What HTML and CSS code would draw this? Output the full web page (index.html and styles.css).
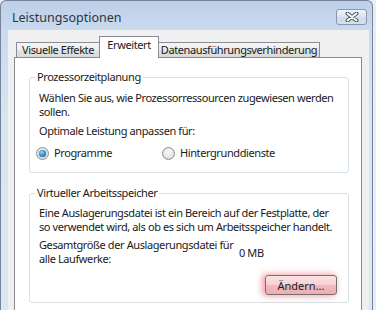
FILE: index.html
```html
<!DOCTYPE html>
<html lang="de">
<head>
    <meta charset="UTF-8">
    <title>Leistungsoptionen</title>
    <link rel="stylesheet" href="styles.css">
</head>
<body>

    <div class="window">
        <div class="titlebar">
            <span class="title">Leistungsoptionen</span>
            <button class="close" type="button" aria-label="Schließen">
                <svg width="14" height="10" viewBox="0 0 14 10">
                    <path d="M2.5 1.5 L11.5 8.5 M11.5 1.5 L2.5 8.5" stroke="#4b5363" stroke-width="4" stroke-linecap="round"/>
                    <path d="M2.5 1.5 L11.5 8.5 M11.5 1.5 L2.5 8.5" stroke="#ffffff" stroke-width="2" stroke-linecap="round"/>
                </svg>
            </button>
        </div>

        <div class="client">
            <div class="tabs">
                <div class="tab tab-first">Visuelle Effekte</div>
                <div class="tab tab-active">Erweitert</div>
                <div class="tab tab-last">Datenausführungsverhinderung</div>
            </div>

            <div class="panel">
                <fieldset class="group group-cpu">
                    <legend>Prozessorzeitplanung</legend>
                    <p>Wählen Sie aus, wie Prozessorressourcen zugewiesen werden<br>sollen.</p>
                    <p class="sub">Optimale Leistung anpassen für:</p>
                    <div class="radios">
                        <label class="radio-item radio-first"><span class="radio checked"></span>Programme</label>
                        <label class="radio-item"><span class="radio"></span>Hintergrunddienste</label>
                    </div>
                </fieldset>

                <fieldset class="group group-mem">
                    <legend>Virtueller Arbeitsspeicher</legend>
                    <p>Eine Auslagerungsdatei ist ein Bereich auf der Festplatte, der<br>so verwendet wird, als ob es sich um Arbeitsspeicher handelt.</p>
                    <div class="size-row">
                        <span class="size-label">Gesamtgröße der Auslagerungsdatei für<br>alle Laufwerke:</span>
                        <span class="size-value">0 MB</span>
                    </div>
                    <div class="actions">
                        <button class="btn" type="button">Ändern...</button>
                    </div>
                </fieldset>
            </div>
        </div>
    </div>

</body>
</html>
```

FILE: styles.css
```css
body {
    margin: 0;
    width: 376px;
    height: 310px;
    overflow: hidden;
    background: #e6eef8;
    font-family: "Noto Sans", "DejaVu Sans", sans-serif;
    font-size: 11px;
    letter-spacing: -0.4px;
    color: #1a1a1a;
}

.window {
    width: 373px;
    height: 310px;
    box-sizing: border-box;
    border: 1px solid #76849a;
    border-bottom: none;
    border-radius: 6px 6px 0 0;
    padding: 0 3px 0 7px;
    overflow: hidden;
    background: linear-gradient(#bdd0e9, #cadbef 30px, #d7e4f3 120px, #dce7f4);
}

.titlebar {
    height: 29px;
    display: flex;
    align-items: flex-start;
}
.title {
    margin: 10px 0 0 4px;
    font-size: 12.5px;
    letter-spacing: 0;
    line-height: 14px;
    color: #2e3440;
}
.close {
    margin: 8px 2px 0 auto;
    width: 31px;
    height: 16px;
    padding: 0;
    border: 1px solid #8797ad;
    border-radius: 3px;
    background: linear-gradient(#eef3fa, #dbe5f1 50%, #cfdbea 51%, #d6e1ee);
    display: flex;
    align-items: center;
    justify-content: center;
}
.close svg { display: block; }

.client {
    height: 290px;
    background: #f0f0f0;
    padding: 6px 7px 0 6px;
}

.tabs {
    position: relative;
    z-index: 1;
    display: flex;
    align-items: flex-start;
    height: 22px;
    margin-bottom: -1px;
    padding-left: 2px;
}
.tab {
    box-sizing: border-box;
    height: 15px;
    margin-top: 6px;
    border: 1px solid #898c95;
    border-bottom: none;
    background: linear-gradient(#f6f6f6, #ececec 50%, #e2e2e2 51%, #dadada);
    text-align: center;
    line-height: 14px;
    white-space: nowrap;
}
.tab-first {
    width: 83px;
    border-right: none;
}
.tab-active {
    width: 60px;
    height: 22px;
    margin-top: 0;
    padding-top: 1px;
    background: #ffffff;
}
.tab-last {
    width: 161px;
    border-left: none;
}

.panel {
    height: 270px;
    border: 1px solid #898c95;
    background: #ffffff;
}

.group {
    margin: 12px 12px 0 14px;
    padding: 7px 9px 12px 9px;
    min-width: 0;
    border: 1px solid #d5dfe5;
    border-radius: 3px;
}
.group legend {
    margin-left: -4px;
    padding: 0 2px;
    line-height: 14px;
}
.group-mem {
    margin-top: 13px;
    padding-top: 6px;
    padding-bottom: 7px;
}

p {
    margin: 0;
    line-height: 14px;
    white-space: nowrap;
}
.sub { margin-top: 5px; }

.radios {
    display: flex;
    margin: 8px 0 0 -3px;
    line-height: 14px;
}
.radio-item {
    display: flex;
    align-items: center;
}
.radio-first { width: 126px; }
.radio {
    box-sizing: border-box;
    width: 13px;
    height: 13px;
    margin-right: 5px;
    border: 1px solid #8d8f91;
    border-radius: 50%;
    background: radial-gradient(circle at 50% 40%, #fbfbfb, #e4e4e4 60%, #cdcdcd);
    display: flex;
    align-items: center;
    justify-content: center;
}
.radio.checked::after {
    content: "";
    width: 7px;
    height: 7px;
    border-radius: 50%;
    background: radial-gradient(circle at 40% 35%, #8edaff, #2a87d2 55%, #0f4d8e);
    box-shadow: 0 0 1px #3b6fa3;
}

.size-row {
    display: flex;
    align-items: center;
    margin-top: 4px;
}
.size-label {
    width: 200px;
    line-height: 14px;
    white-space: nowrap;
}

.actions {
    display: flex;
    justify-content: flex-end;
    margin-top: 9px;
}
.btn {
    width: 72px;
    height: 20px;
    margin-right: 2px;
    padding: 0;
    border: 1px solid #707070;
    border-radius: 3px;
    font: inherit;
    color: #1a1a1a;
    background: linear-gradient(#fbe3e4, #f6d0d2 50%, #f0b9bd 51%, #ecb0b4);
    box-shadow: -2px 0 6px 1px rgba(232, 80, 92, 0.55);
}
```
